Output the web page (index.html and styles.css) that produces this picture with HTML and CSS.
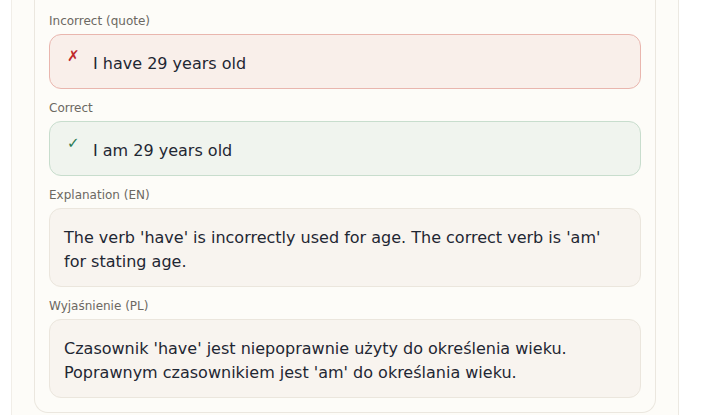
FILE: index.html
```html
<!DOCTYPE html>
<html lang="en">
<head>
<meta charset="utf-8">
<title>Correction</title>
<link rel="stylesheet" href="styles.css">
</head>
<body>
<div class="page">
  <div class="column">
    <div class="card">
      <div class="field">
        <div class="label">Incorrect (quote)</div>
        <div class="quote quote-bad"><span class="icon icon-bad">✗</span><span class="qtext">I have 29 years old</span></div>
      </div>
      <div class="field">
        <div class="label">Correct</div>
        <div class="quote quote-good"><span class="icon icon-good">✓</span><span class="qtext">I am 29 years old</span></div>
      </div>
      <div class="field">
        <div class="label">Explanation (EN)</div>
        <div class="note">The verb 'have' is incorrectly used for age. The correct verb is 'am' for stating age.</div>
      </div>
      <div class="field">
        <div class="label">Wyjaśnienie (PL)</div>
        <div class="note">Czasownik 'have' jest niepoprawnie użyty do określenia wieku. Poprawnym czasownikiem jest 'am' do określania wieku.</div>
      </div>
    </div>
  </div>
</div>
</body>
</html>
```

FILE: styles.css
```css
html, body {
  margin: 0;
  padding: 0;
  background: #ffffff;
}

body {
  font-family: "DejaVu Sans", "Liberation Sans", sans-serif;
  color: #1f2733;
}

.page {
  display: flex;
  min-height: 415px;
}

.column {
  margin-left: 11px;
  width: 622px;
  padding: 0 22px;
  background: #fdfcf8;
  border-left: 1px solid #f1eee8;
  border-right: 1px solid #ece9e2;
  min-height: 415px;
}

.card {
  background: #fdfcf8;
  border: 1px solid #ebe7df;
  border-top: none;
  border-radius: 0 0 14px 14px;
  padding: 13px 14px 14px;
}

.field + .field {
  margin-top: 11px;
}

.label {
  font-size: 12px;
  line-height: 16px;
  color: #6c6862;
  margin-bottom: 5px;
}

.quote {
  display: flex;
  align-items: flex-start;
  border: 1px solid;
  border-radius: 12px;
  padding: 17px 14px 12px;
  font-size: 16px;
  line-height: 24px;
}

.quote-bad {
  background: #f9efea;
  border-color: #e9b6ae;
}

.quote-good {
  background: #f0f4ee;
  border-color: #c8ddcd;
}

.icon {
  width: 16px;
  margin: -4px 10px 0 3px;
  font-size: 15px;
  line-height: 16px;
  flex: none;
}

.icon-bad {
  color: #c0282a;
}

.icon-good {
  color: #2a7a52;
}

.note {
  background: #f8f4ef;
  border: 1px solid #ebe6dd;
  border-radius: 12px;
  padding: 17px 14px 12px;
  font-size: 16px;
  line-height: 24px;
}
```
